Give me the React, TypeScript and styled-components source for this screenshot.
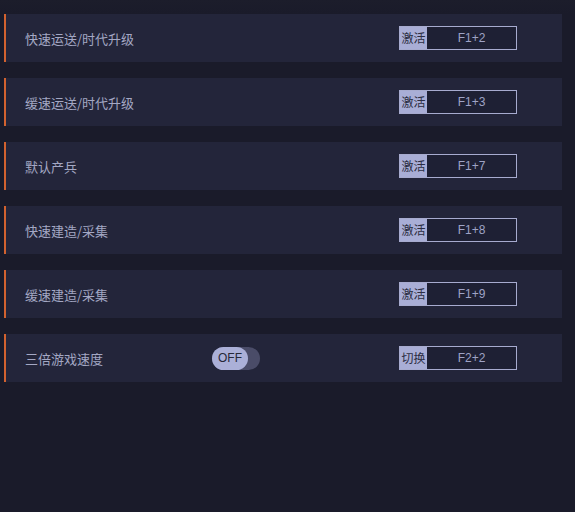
import styled, { createGlobalStyle } from 'styled-components';

const GlobalStyle = createGlobalStyle`
    html, body {
        margin: 0;
        padding: 0;
        background-color: #1a1b2a;
    }
`;

interface Cheat {
    name: string;
    action: string;
    hotkey: string;
    toggle?: boolean;
}

const cheats : Cheat[] = [
    { name: '快速运送/时代升级', action: '激活', hotkey: 'F1+2' },
    { name: '缓速运送/时代升级', action: '激活', hotkey: 'F1+3' },
    { name: '默认产兵', action: '激活', hotkey: 'F1+7' },
    { name: '快速建造/采集', action: '激活', hotkey: 'F1+8' },
    { name: '缓速建造/采集', action: '激活', hotkey: 'F1+9' },
    { name: '三倍游戏速度', action: '切换', hotkey: 'F2+2', toggle: true },
];

const Page = styled.div`
    width: 575px;
    height: 512px;
    box-sizing: border-box;
    padding: 14px 13px 0 4px;
    background: linear-gradient(180deg, #1c1d2b 0px, #1a1b2a 14px, #1a1b2a 100%);
    font-family: "Noto Sans CJK SC", "Noto Sans", sans-serif;
`;

const List = styled.div`
    display: flex;
    flex-direction: column;
    gap: 16px;
`;

const Row = styled.div`
    display: flex;
    align-items: center;
    height: 48px;
    background-color: #23253a;
    border-left: 2px solid #d2622f;
    box-sizing: border-box;
`;

const Name = styled.div`
    width: 187px;
    padding-left: 19px;
    font-size: 13px;
    color: #a4a8c4;
    white-space: nowrap;
`;

const ToggleSlot = styled.div`
    width: 187px;
    display: flex;
    align-items: center;
`;

const Track = styled.div`
    position: relative;
    width: 48px;
    height: 23px;
    border-radius: 12px;
    background-color: #4a4c68;
`;

const Knob = styled.div`
    position: absolute;
    left: 0;
    top: 0;
    width: 36px;
    height: 23px;
    border-radius: 12px;
    background-color: #abb0d8;
    color: #262838;
    font-family: "Liberation Sans", Arial, sans-serif;
    font-size: 12px;
    line-height: 23px;
    text-align: center;
`;

const HotkeyBox = styled.div`
    display: flex;
    width: 118px;
    height: 24px;
    border: 1px solid #a7abcf;
    box-sizing: border-box;
    background-color: #1e2034;
`;

const ActionLabel = styled.div`
    width: 27px;
    background-color: #a9aed6;
    color: #2b2d42;
    font-size: 12px;
    line-height: 22px;
    text-align: center;
    white-space: nowrap;
    overflow: hidden;
`;

const KeyText = styled.div`
    flex: 1;
    color: #9ea3c6;
    font-family: "Liberation Sans", Arial, sans-serif;
    font-size: 12px;
    line-height: 22px;
    text-align: center;
`;

function App()
{
    return (
        <Page>
            <GlobalStyle />
            <List>
                {cheats.map((item, index) => (
                    <Row key={index}>
                        <Name>{item.name}</Name>
                        <ToggleSlot>
                            {item.toggle && (
                                <Track>
                                    <Knob>OFF</Knob>
                                </Track>
                            )}
                        </ToggleSlot>
                        <HotkeyBox>
                            <ActionLabel>{item.action}</ActionLabel>
                            <KeyText>{item.hotkey}</KeyText>
                        </HotkeyBox>
                    </Row>
                ))}
            </List>
        </Page>
    );
}

export default App;
